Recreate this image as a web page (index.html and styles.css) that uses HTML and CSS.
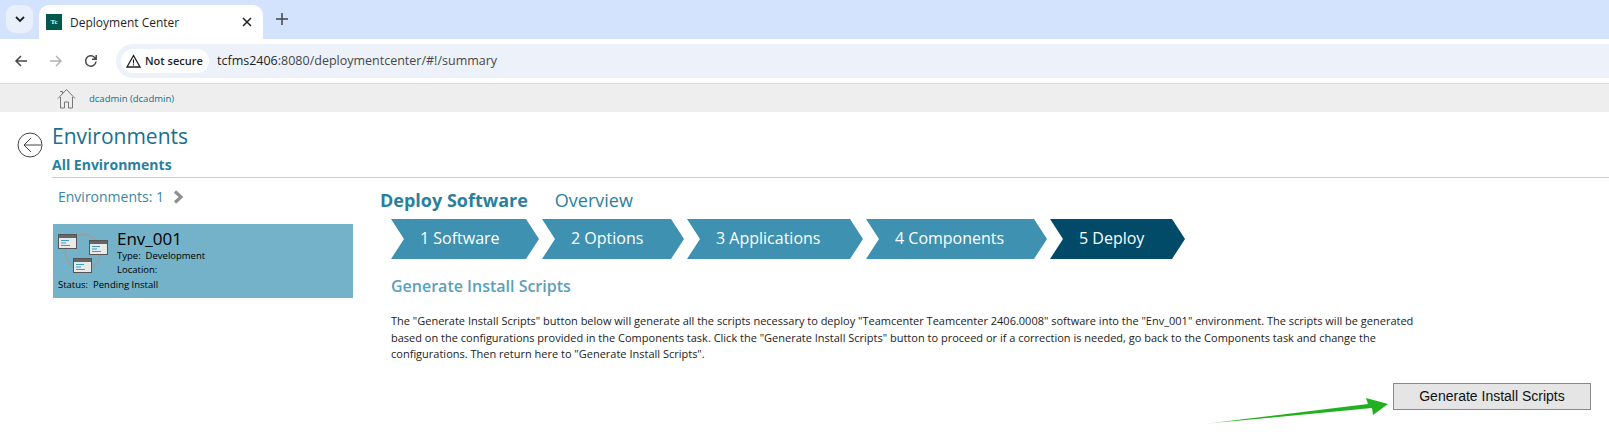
FILE: index.html
```html
<!DOCTYPE html>
<html lang="en">
<head>
<meta charset="utf-8">
<title>Deployment Center</title>
<link rel="stylesheet" href="styles.css">
</head>
<body>
<div class="tabstrip">
  <div class="tab-menu"><svg width="12" height="12" viewBox="0 0 12 12"><path d="M2 4l4 4 4-4" fill="none" stroke="#1f1f1f" stroke-width="1.8"/></svg></div>
  <div class="tab">
    <span class="favicon">Tc</span>
    <span class="tab-title">Deployment Center</span>
    <svg class="tab-close" width="10" height="10" viewBox="0 0 10 10"><path d="M1 1l8 8M9 1l-8 8" stroke="#1f1f1f" stroke-width="1.5"/></svg>
  </div>
  <svg class="tab-new" width="14" height="14" viewBox="0 0 14 14"><path d="M7 1v12M1 7h12" stroke="#444" stroke-width="1.5"/></svg>
</div>
<div class="toolbar">
  <div class="nav">
    <svg width="16" height="16" viewBox="0 0 16 16"><path d="M14 8H3M8 3L3 8l5 5" fill="none" stroke="#474747" stroke-width="1.5"/></svg>
    <svg width="16" height="16" viewBox="0 0 16 16"><path d="M2 8h11M8 3l5 5-5 5" fill="none" stroke="#b3b3b3" stroke-width="1.5"/></svg>
    <svg width="16" height="16" viewBox="0 0 16 16"><path d="M13 8.5A5.2 5.2 0 1 1 11.6 4.4L13 6M13.2 2v4.2H9" fill="none" stroke="#474747" stroke-width="1.5"/></svg>
  </div>
  <div class="omnibox">
    <div class="chip">
      <svg width="15" height="14" viewBox="0 0 15 14"><path d="M7.500 1.500L14 13H1z" fill="none" stroke="#1f1f1f" stroke-width="1.300"/><path d="M7.500 5.500v4M7.500 10.300v1.200" stroke="#1f1f1f" stroke-width="1.200"/></svg>
      <span>Not secure</span>
    </div>
    <div class="url"><span class="url-host">tcfms2406</span>:8080/deploymentcenter/#!/summary</div>
  </div>
</div>
<div class="userbar">
  <svg class="home" width="19" height="21" viewBox="0 0 19 21"><path d="M1 10.500L9.500 1.500 18 10.500M3.500 9v11h4v-6h4v6h4V9M3 3.500h2.500v2.500" fill="none" stroke="#777" stroke-width="1"/></svg>
  <span class="user">dcadmin (dcadmin)</span>
</div>
<div class="head">
  <svg class="back" width="26" height="26" viewBox="0 0 26 26"><circle cx="13" cy="13" r="12" fill="none" stroke="#444" stroke-width="1"/><path d="M24 13H7M14 6l-7 7 7 7" fill="none" stroke="#444" stroke-width="1"/></svg>
  <div class="head-text">
    <h1>Environments</h1>
    <h2>All Environments</h2>
  </div>
</div>
<main class="content">
  <aside class="side">
    <div class="count">Environments: 1 <svg width="11" height="14" viewBox="0 0 11 14"><path d="M2 1.500L8 7l-6 5.500" fill="none" stroke="#8f8f8f" stroke-width="3.200"/></svg></div>
    <div class="card">
      <svg class="env-icon" width="52" height="46" viewBox="0 0 52 46">
        <circle cx="25" cy="23" r="17.500" fill="none" stroke="#9a9fa3" stroke-width="1.500"/>
        <g>
          <rect x="0.500" y="5.500" width="18" height="14" fill="#e8eaea" stroke="#555"/><rect x="1" y="6" width="17" height="3" fill="#666"/><path d="M3 11.500h8M3 14h5M3 16.500h9" stroke="#3c9cc0" stroke-width="1.200"/>
          <rect x="31.500" y="11.500" width="18" height="14" fill="#e8eaea" stroke="#555"/><rect x="32" y="12" width="17" height="3" fill="#666"/><path d="M34 17.500h8M34 20h5M34 22.500h9" stroke="#3c9cc0" stroke-width="1.200"/>
          <rect x="15.500" y="29.500" width="18" height="14" fill="#e8eaea" stroke="#555"/><rect x="16" y="30" width="17" height="3" fill="#666"/><path d="M18 35.500h8M18 38h5M18 40.500h9" stroke="#3c9cc0" stroke-width="1.200"/>
        </g>
      </svg>
      <div class="card-main">
        <div class="env-name">Env_001</div>
        <div class="env-line">Type:&nbsp; Development</div>
        <div class="env-line">Location:</div>
      </div>
      <div class="env-status">Status:&nbsp; Pending Install</div>
    </div>
  </aside>
  <section class="main">
    <div class="tabs"><span class="tabs-active">Deploy Software</span><span class="tabs-other">Overview</span></div>
    <ol class="steps">
      <li class="step s1">1 Software</li>
      <li class="step s2">2 Options</li>
      <li class="step s3">3 Applications</li>
      <li class="step s4">4 Components</li>
      <li class="step s5 current">5 Deploy</li>
    </ol>
    <h3>Generate Install Scripts</h3>
    <p>The "Generate Install Scripts" button below will generate all the scripts necessary to deploy "Teamcenter Teamcenter 2406.0008" software into the "Env_001" environment. The scripts will be generated<br>based on the configurations provided in the Components task. Click the "Generate Install Scripts" button to proceed or if a correction is needed, go back to the Components task and change the<br>configurations. Then return here to "Generate Install Scripts".</p>
    <div class="actions"><button type="button">Generate Install Scripts</button></div>
  </section>
</main>
<svg class="arrow" width="190" height="34" viewBox="0 0 190 34"><defs><linearGradient id="g" x1="0" x2="1" y1="0" y2="0"><stop offset="0" stop-color="#20b020" stop-opacity="0.1"/><stop offset="0.2" stop-color="#20b020"/></linearGradient></defs><path d="M1 29L166 9l-2-6 22 6-15 11-1-7z" fill="url(#g)"/></svg>
</body>
</html>
```
FILE: styles.css
```css
* { box-sizing: border-box; }
html, body { margin: 0; padding: 0; }
body { position: relative; width: 1609px; height: 443px; overflow: hidden; background: #fff; font-family: "Open Sans", "Noto Sans", sans-serif; color: #000; }

.tabstrip { height: 39px; background: #d3e3fd; display: flex; align-items: flex-start; padding: 5px 0 0 6px; }
.tab-menu { width: 27px; height: 28px; background: #e9f0fc; border-radius: 9px; display: flex; align-items: center; justify-content: center; }
.tab { width: 224px; height: 34px; margin-left: 6px; background: #fff; border-radius: 10px 10px 0 0; display: flex; align-items: center; padding: 0 11px 0 7px; }
.favicon { width: 16px; height: 16px; background: #00594c; color: #e8f0e8; font: bold 7px "Liberation Serif", serif; display: flex; align-items: center; justify-content: center; }
.tab-title { flex: 1; margin-left: 8px; font: 12px "Open Sans", sans-serif; color: #1f1f1f; }
.tab-new { margin: 7px 0 0 12px; }

.toolbar { height: 45px; background: #fff; border-bottom: 1px solid #d9d9d9; display: flex; align-items: center; padding: 0 0 1px 13px; }
.nav { display: flex; gap: 19px; width: 103px; }
.omnibox { flex: 1; height: 34px; background: #edf2fa; border-radius: 17px 0 0 17px; display: flex; align-items: center; padding-left: 5px; }
.chip { width: 88px; height: 24px; background: #fff; border-radius: 12px; display: flex; align-items: center; gap: 4px; padding-left: 5px; font: 600 11px "Open Sans", sans-serif; color: #1f1f1f; white-space: nowrap; }
.url { margin-left: 8px; font: 12.5px "Open Sans", sans-serif; color: #474747; }
.url-host { color: #1f1f1f; }

.userbar { height: 28px; background: #eeeeee; display: flex; align-items: center; padding-left: 57px; gap: 13px; }
.user { font-size: 9.5px; color: #0f6f91; }

.head { display: flex; padding: 10px 0 0 17px; gap: 9px; }
.back { margin-top: 10px; flex: none; }
.head-text { flex: 1; }
h1 { margin: 0; font-size: 21px; line-height: 29px; font-weight: 400; color: #1a6f8e; }
h2 { margin: 5px 0 0; font-size: 14px; line-height: 18px; padding-bottom: 3px; font-weight: 700; color: #2a7f9e; border-bottom: 1px solid #cccccc; }

.content { display: flex; padding-left: 53px; }
.side { width: 300px; flex: none; }
.count { margin: 9px 0 0 5px; font-size: 14px; line-height: 20px; color: #3a88a6; display: flex; align-items: center; gap: 9px; }
.card { position: relative; margin-top: 17px; height: 74px; background: #73b2c8; display: flex; padding: 5px 0 0 5px; }
.env-icon { flex: none; }
.card-main { margin-left: 7px; }
.env-name { font-size: 17px; line-height: 20px; }
.env-line { font-size: 9.5px; line-height: 14px; }
.env-status { position: absolute; left: 5px; bottom: 6px; font-size: 9.5px; line-height: 14px; }

.main { margin-left: 27px; flex: 1; }
.tabs { margin-top: 9px; display: flex; gap: 27px; align-items: baseline; line-height: 26px; font-size: 18px; color: #2a7f9e; }
.tabs-active { font-weight: 700; }
.steps { list-style: none; margin: 6px 0 0 11px; padding: 0; display: flex; gap: 3px; }
.step { height: 40px; line-height: 38px; padding-left: 29px; font-size: 16px; color: #fff; background: #3e91b0; clip-path: polygon(0 0, calc(100% - 13px) 0, 100% 50%, calc(100% - 13px) 100%, 0 100%, 13px 50%); }
.s1 { width: 148px; }
.s2 { width: 142px; }
.s3 { width: 176px; }
.s4 { width: 181px; }
.s5 { width: 135px; }
.current { background: #014a68; }
h3 { margin: 15px 0 0 11px; font-size: 16px; line-height: 24px; font-weight: 600; color: #5b9fba; }
p { margin: 15px 0 0 11px; font-size: 11px; line-height: 16.5px; color: #222; white-space: nowrap; }
.actions { margin-top: 20px; padding-right: 18px; display: flex; justify-content: flex-end; }
button { width: 198px; height: 27px; padding: 0; background: #e5e5e5; border: 1px solid #888; border-radius: 0; font: 14px "Liberation Sans", Arial, sans-serif; color: #111; }

.arrow { position: absolute; left: 1202px; top: 395px; }
```
